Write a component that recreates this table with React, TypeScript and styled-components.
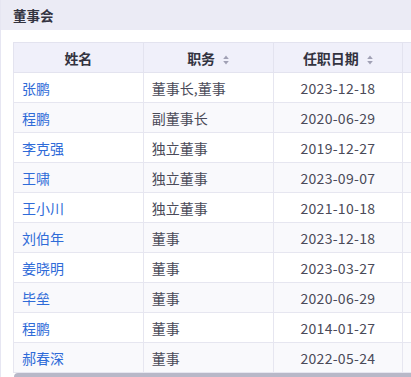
import React from 'react';
import styled, { createGlobalStyle } from 'styled-components';

const GlobalStyle = createGlobalStyle`
  body {
    margin: 0;
    background: #ffffff;
    font-family: "Noto Sans CJK SC", "Noto Sans", sans-serif;
  }
`;

interface IRow {
  name: string;
  post: string;
  date: string;
}

const rows: IRow[] = [
  { name: '张鹏', post: '董事长,董事', date: '2023-12-18' },
  { name: '程鹏', post: '副董事长', date: '2020-06-29' },
  { name: '李克强', post: '独立董事', date: '2019-12-27' },
  { name: '王啸', post: '独立董事', date: '2023-09-07' },
  { name: '王小川', post: '独立董事', date: '2021-10-18' },
  { name: '刘伯年', post: '董事', date: '2023-12-18' },
  { name: '姜晓明', post: '董事', date: '2023-03-27' },
  { name: '毕垒', post: '董事', date: '2020-06-29' },
  { name: '程鹏', post: '董事', date: '2014-01-27' },
  { name: '郝春深', post: '董事', date: '2022-05-24' },
];

const Panel = styled.div`
  width: 411px;
  height: 377px;
  box-sizing: border-box;
  border-left: 1px solid #e6e6f2;
  overflow: hidden;
  display: flex;
  flex-direction: column;
`;

const TitleBar = styled.div`
  height: 30px;
  flex-shrink: 0;
  background: #ebebf5;
  display: flex;
  align-items: center;
  padding-left: 12px;
  font-size: 13.5px;
  font-weight: 700;
  color: #333340;
`;

const Body = styled.div`
  padding: 12px 0 0 12px;
`;

const Scroller = styled.div`
  overflow: hidden;
`;

// horizontal scrollbar of the table, only its thumb is in view
const ScrollTrack = styled.div`
  height: 8px;
  padding-left: 1px;
`;

const ScrollThumb = styled.div`
  height: 100%;
  background: #b8b8c8;
  border-radius: 4px 0 0 4px;
`;

const Table = styled.table`
  border-collapse: collapse;
  table-layout: fixed;
  width: 520px;
  font-size: 14px;
`;

const Th = styled.th`
  height: 29px;
  padding: 0 8px;
  background: #f0f0fa;
  border: 1px solid #e3e3ef;
  color: #333340;
  font-weight: 700;
  text-align: center;
  white-space: nowrap;
`;

const Tr = styled.tr<{ $odd: boolean }>`
  background: ${(p) => (p.$odd ? '#f9f9fc' : '#ffffff')};
`;

const Td = styled.td<{ $align?: string; $link?: boolean }>`
  height: 29px;
  padding: 0 8px;
  border: 1px solid #e6e6f0;
  text-align: ${(p) => p.$align || 'left'};
  color: ${(p) => (p.$link ? '#2f6bd8' : '#4a4a58')};
  white-space: nowrap;
`;

const DateText = styled.span`
  letter-spacing: 0.3px;
`;

const SortIcon = styled.svg`
  margin-left: 8px;
  vertical-align: -1px;
`;

const Sort = () => (
  <SortIcon width="6" height="10" viewBox="0 0 6 10">
    <path d="M3 0.5 L5.8 4 H0.2 Z" fill="#a0a0b4" />
    <path d="M3 9.5 L5.8 6 H0.2 Z" fill="#a0a0b4" />
  </SortIcon>
);

const App = () => {
  return (
    <>
      <GlobalStyle />
      <Panel>
        <TitleBar>董事会</TitleBar>
        <Body>
          <Scroller>
            <Table>
              <thead>
                <tr>
                  <Th>姓名</Th>
                  <Th>
                    职务
                    <Sort />
                  </Th>
                  <Th>
                    任职日期
                    <Sort />
                  </Th>
                  <Th />
                </tr>
              </thead>
              <tbody>
                {rows.map((r, i) => (
                  <Tr key={i} $odd={i % 2 === 1}>
                    <Td $link>{r.name}</Td>
                    <Td>{r.post}</Td>
                    <Td $align="center">
                      <DateText>{r.date}</DateText>
                    </Td>
                    <Td />
                  </Tr>
                ))}
              </tbody>
            </Table>
          </Scroller>
          <ScrollTrack>
            <ScrollThumb />
          </ScrollTrack>
        </Body>
      </Panel>
    </>
  );
};

export default App;
